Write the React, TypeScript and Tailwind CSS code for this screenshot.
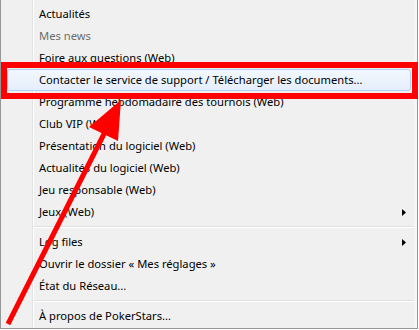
import React from "react"

type Item = { label: string; disabled?: boolean; sub?: boolean; hot?: boolean } | "sep"

const items: Item[] = [
  { label: "Actualités" },
  { label: "Mes news", disabled: true },
  { label: "Foire aux questions (Web)" },
  { label: "Contacter le service de support / Télécharger les documents...", hot: true },
  { label: "Programme hebdomadaire des tournois (Web)" },
  { label: "Club VIP (Web)" },
  { label: "Présentation du logiciel (Web)" },
  { label: "Actualités du logiciel (Web)" },
  { label: "Jeu responsable (Web)" },
  { label: "Jeux (Web)", sub: true },
  "sep",
  { label: "Log files", sub: true },
  { label: "Ouvrir le dossier « Mes réglages »" },
  { label: "État du Réseau..." },
  "sep",
  { label: "À propos de PokerStars..." },
]

function SubArrow() {
  return (
    <svg width="4" height="7" viewBox="0 0 4 7" className="shrink-0">
      <path d="M0 0 L4 3.5 L0 7 Z" fill="#000" />
    </svg>
  )
}

export default function App() {
  return (
    <div className="relative w-[419px] h-[330px] bg-white overflow-hidden" style={{ fontFamily: '"Segoe UI", "Noto Sans", sans-serif' }}>
      {/* context menu, top cut off */}
      <div className="flex flex-col w-[418px] h-[329px] pt-[3px] border-l border-r border-b border-[#979797] shadow-[inset_-3px_0_0_#f5f5f5] bg-[linear-gradient(to_right,#f0f0f0_31px,#e2e3e3_31px,#e2e3e3_32px,#ffffff_32px,#ffffff_33px,#f0f0f0_33px)]">
        {items.map((it, i) =>
          it === "sep" ? (
            <div key={i} className="h-[8px] flex flex-col justify-center ml-[32px] mr-[3px]">
              <div className="h-px bg-[#e0e0e0]" />
              <div className="h-px bg-white" />
            </div>
          ) : (
            <div
              key={i}
              className={`h-[22px] mx-[6px] pl-[31px] pr-[4px] flex items-center justify-between rounded-[3px] border ${
                it.hot
                  ? "border-[#aecff7] bg-gradient-to-b from-[#f2f8fe] to-[#e4eefb]"
                  : "border-transparent"
              }`}
            >
              <span
                className={`text-[11.2px] leading-none whitespace-nowrap ${
                  it.disabled ? "text-[#6d6d6d]" : "text-black"
                }`}
              >
                {it.label}
              </span>
              {it.sub && <SubArrow />}
            </div>
          )
        )}
      </div>

      {/* annotation: red box */}
      <div className="absolute left-[1px] top-[62px] w-[417px] h-[37px] border-[6px] border-[#ff0000]" />

      {/* annotation: arrow */}
      <svg className="absolute inset-0" width="419" height="330" viewBox="0 0 419 330">
        <line x1="8" y1="324" x2="106" y2="130" stroke="#ff0000" strokeWidth="5" />
        <polygon points="121,100 89,127 118,141" fill="#ff0000" />
      </svg>
    </div>
  )
}
